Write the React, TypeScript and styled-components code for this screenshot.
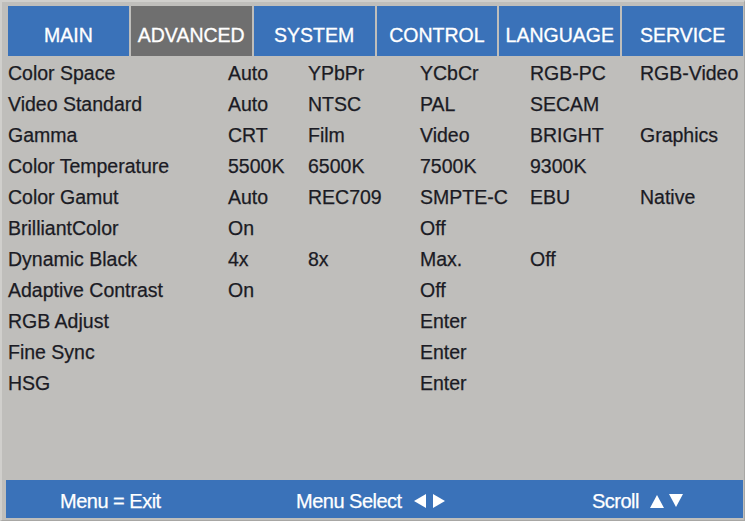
import styled, { createGlobalStyle } from "styled-components";

const GlobalStyle = createGlobalStyle`
  html, body {
    margin: 0;
    padding: 0;
    background: #ffffff;
  }
  body {
    font-family: "Liberation Sans", Arial, sans-serif;
  }
`;

const tabs = ["MAIN", "ADVANCED", "SYSTEM", "CONTROL", "LANGUAGE", "SERVICE"];
const activeTab = "ADVANCED";

const rows: string[][] = [
  ["Color Space", "Auto", "YPbPr", "YCbCr", "RGB-PC", "RGB-Video"],
  ["Video Standard", "Auto", "NTSC", "PAL", "SECAM", ""],
  ["Gamma", "CRT", "Film", "Video", "BRIGHT", "Graphics"],
  ["Color Temperature", "5500K", "6500K", "7500K", "9300K", ""],
  ["Color Gamut", "Auto", "REC709", "SMPTE-C", "EBU", "Native"],
  ["BrilliantColor", "On", "", "Off", "", ""],
  ["Dynamic Black", "4x", "8x", "Max.", "Off", ""],
  ["Adaptive Contrast", "On", "", "Off", "", ""],
  ["RGB Adjust", "", "", "Enter", "", ""],
  ["Fine Sync", "", "", "Enter", "", ""],
  ["HSG", "", "", "Enter", "", ""],
];

const Triangle = ({ dir }: { dir: "left" | "right" | "up" | "down" }) => {
  const points = {
    left: "13,1 13,15 1,8",
    right: "1,1 1,15 13,8",
    up: "7,2 14,15 0,15",
    down: "0,1 14,1 7,14",
  }[dir];
  return (
    <svg width="14" height="16" viewBox="0 0 14 16">
      <polygon points={points} fill="#ffffff" />
    </svg>
  );
};

export default function App() {
  return (
    <>
      <GlobalStyle />
      <Panel>
        <TabBar>
          {tabs.map((t) => (
            <Tab key={t} active={t === activeTab}>
              {t}
            </Tab>
          ))}
        </TabBar>

        <Body>
          {rows.map((r) => (
            <Row key={r[0]}>
              {r.map((cell, i) => (
                <Cell key={i}>{cell}</Cell>
              ))}
            </Row>
          ))}
        </Body>

        <Footer>
          <Hint>Menu = Exit</Hint>
          <Hint>
            Menu Select
            <Arrows>
              <Triangle dir="left" />
              <Triangle dir="right" />
            </Arrows>
          </Hint>
          <Hint>
            Scroll
            <Arrows>
              <Triangle dir="up" />
              <Triangle dir="down" />
            </Arrows>
          </Hint>
        </Footer>
      </Panel>
    </>
  );
}

const Panel = styled.div`
  box-sizing: border-box;
  width: 745px;
  height: 521px;
  display: flex;
  flex-direction: column;
  background: #bfbebb;
  border-top: 2px solid #d0cfcc;
  border-left: 2px solid #d0cfcc;
  border-right: 1px solid #a8a7a4;
  border-bottom: 1px solid #a8a7a4;
  padding: 4px 1px 2px 4px;
`;

const TabBar = styled.div`
  display: grid;
  grid-template-columns: repeat(6, 1fr);
  gap: 2px;
  height: 50px;
  margin-left: 2px;
`;

const Tab = styled.div<{ active?: boolean }>`
  display: flex;
  align-items: center;
  justify-content: center;
  padding-top: 9px;
  box-sizing: border-box;
  background: ${(p) => (p.active ? "#6f6f6f" : "#3a72b9")};
  color: #ffffff;
  font-size: 19.5px;
  -webkit-text-stroke: 0.3px #ffffff;
`;

const Body = styled.div`
  flex: 1;
  padding-top: 2px;
`;

const Row = styled.div`
  display: grid;
  grid-template-columns: 222px 80px 112px 110px 110px 1fr;
  align-items: center;
  height: 31px;
`;

const Cell = styled.span`
  font-size: 19.5px;
  color: #1b1b24;
  white-space: nowrap;
  -webkit-text-stroke: 0.25px #1b1b24;

  &:first-child {
    padding-left: 2px;
  }
`;

const Footer = styled.div`
  display: grid;
  grid-template-columns: 236px 296px 1fr;
  align-items: center;
  height: 38px;
  box-sizing: border-box;
  padding: 4px 0 0 54px;
  background: #3a72b9;
`;

const Hint = styled.div`
  display: flex;
  align-items: center;
  gap: 11px;
  color: #ffffff;
  font-size: 20px;
  letter-spacing: -0.5px;
  -webkit-text-stroke: 0.25px #ffffff;
`;

const Arrows = styled.span`
  display: inline-flex;
  gap: 5px;
`;
